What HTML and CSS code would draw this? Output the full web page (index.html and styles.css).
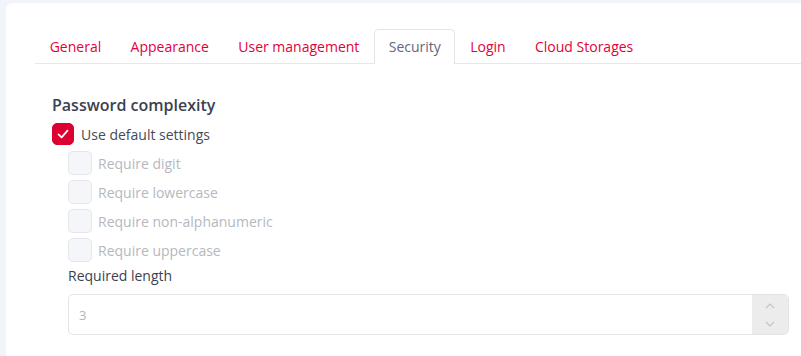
FILE: index.html
```html
<!DOCTYPE html>
<html lang="en">
<head>
    <meta charset="UTF-8">
    <title>Settings</title>
    <link rel="stylesheet" href="styles.css">
</head>
<body>

    <div class="card">
        <!-- tabs -->
        <div class="tabs">
            <a class="tab">General</a>
            <a class="tab">Appearance</a>
            <a class="tab">User management</a>
            <a class="tab tab-active">Security</a>
            <a class="tab">Login</a>
            <a class="tab">Cloud Storages</a>
        </div>

        <div class="tab-body">
            <h4 class="section-title">Password complexity</h4>

            <label class="check check-main">
                <span class="box box-checked">
                    <svg width="14" height="14" viewBox="0 0 14 14"><path d="M2.5 7.4 L5.6 10.3 L11.5 3.6" fill="none" stroke="#fff" stroke-width="1.8" stroke-linecap="round" stroke-linejoin="round"/></svg>
                </span>
                <span class="check-label">Use default settings</span>
            </label>

            <div class="sub-options">
                <label class="check check-disabled">
                    <span class="box"></span>
                    <span class="check-label">Require digit</span>
                </label>
                <label class="check check-disabled">
                    <span class="box"></span>
                    <span class="check-label">Require lowercase</span>
                </label>
                <label class="check check-disabled">
                    <span class="box"></span>
                    <span class="check-label">Require non-alphanumeric</span>
                </label>
                <label class="check check-disabled">
                    <span class="box"></span>
                    <span class="check-label">Require uppercase</span>
                </label>

                <div class="field-label">Required length</div>
                <div class="number-input">
                    <span class="number-value">3</span>
                    <span class="spinner">
                        <svg width="12" height="8" viewBox="0 0 12 8"><path d="M2 6 L6 2 L10 6" fill="none" stroke="#c4c4c4" stroke-width="1.2"/></svg>
                        <svg width="12" height="8" viewBox="0 0 12 8"><path d="M2 2 L6 6 L10 2" fill="none" stroke="#c4c4c4" stroke-width="1.2"/></svg>
                    </span>
                </div>
            </div>
        </div>
    </div>

</body>
</html>
```

FILE: styles.css
```css
body {
    margin: 0;
    padding: 3px 0 0 6px;
    background: #f1f4f8;
    font-family: "Open Sans", "Noto Sans", sans-serif;
    height: 356px;
    box-sizing: border-box;
    overflow: hidden;
}

.card {
    background: #fff;
    border-radius: 6px 0 0 0;
    padding: 26px 0 0 29px;
    height: 100%;
    box-sizing: border-box;
}

.tabs {
    display: flex;
    border-bottom: 1px solid #e6e8ee;
}

.tab {
    display: block;
    padding: 0 13.7px;
    height: 33px;
    line-height: 33px;
    font-size: 14px;
    color: #e4003b;
    border: 1px solid transparent;
    border-bottom: none;
    border-radius: 5px 5px 0 0;
    margin-bottom: -1px;
}

.tab-active {
    color: #5d6783;
    background: #fff;
    border-color: #e2e4ea;
    height: 34px;
}

.tab-body {
    padding: 30px 0 0 17px;
}

.section-title {
    margin: 0 0 7px;
    font-size: 16px;
    font-weight: 600;
    color: #3b3f50;
}

.check {
    display: flex;
    align-items: center;
    height: 22px;
}

.check-main {
    margin-bottom: 6px;
}

.box {
    width: 22px;
    height: 22px;
    box-sizing: border-box;
    border-radius: 5px;
    border: 1px solid #e4e6ec;
    background: #f5f6f9;
    display: flex;
    align-items: center;
    justify-content: center;
}

.box-checked {
    background: #dc0130;
    border-color: #dc0130;
}

.check-label {
    margin-left: 7px;
    font-size: 14px;
    color: #464a58;
}

.sub-options {
    padding-left: 16px;
}

.check-disabled {
    height: 24px;
    margin-bottom: 5px;
}

.check-disabled .box {
    width: 24px;
    height: 24px;
}

.check-disabled .check-label {
    margin-left: 6px;
    color: #b5b8c1;
}

.field-label {
    font-size: 14px;
    font-weight: 500;
    color: #3b3f50;
    margin-top: -1px;
}

.number-input {
    margin-top: 9px;
    width: 721px;
    height: 41px;
    box-sizing: border-box;
    border: 1px solid #e2e4ea;
    border-radius: 5px;
    display: flex;
    align-items: center;
    overflow: hidden;
}

.number-value {
    flex: 1;
    padding-left: 10px;
    font-size: 13px;
    color: #b5b5b5;
}

.spinner {
    width: 36px;
    height: 100%;
    background: #ececec;
    display: flex;
    flex-direction: column;
    align-items: center;
    justify-content: center;
    gap: 10px;
}
```
